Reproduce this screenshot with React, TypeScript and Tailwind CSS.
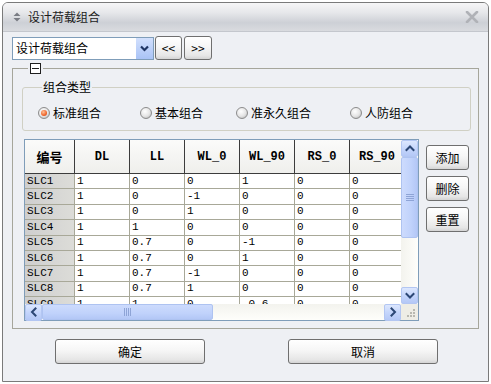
import React from "react";

const CJK = "[font-family:'Noto_Sans_CJK_SC','Noto_Sans',sans-serif]";
const MONO = "[font-family:'Liberation_Mono','Noto_Sans_CJK_SC',monospace]";

function XPButton({ children, className }: { children: React.ReactNode; className: string }) {
  return (
    <div
      className={
        "flex items-center justify-center rounded-[3px] border border-[#6f6f6f] bg-[linear-gradient(to_bottom,#ffffff_0%,#f6f6f6_45%,#e6e6e6_85%,#d4d4d4_100%)] text-[12px] leading-none text-black " +
        CJK +
        " " +
        className
      }
    >
      {children}
    </div>
  );
}

function Radio({ label, checked, w }: { label: string; checked?: boolean; w: string }) {
  return (
    <div className={"flex items-center " + w}>
      <span className="flex h-[12px] w-[12px] items-center justify-center rounded-full border border-[#8c8c8c] bg-[radial-gradient(circle_at_40%_35%,#ffffff_0%,#e4e4e4_55%,#a9a9a9_100%)]">
        {checked && (
          <span className="h-[6px] w-[6px] rounded-full bg-[radial-gradient(circle_at_40%_35%,#ffc39a_0%,#f0652a_60%,#c83a10_100%)]" />
        )}
      </span>
      <span className={"ml-[3px] text-[12px] leading-none text-black " + CJK}>{label}</span>
    </div>
  );
}

function ArrowBtn({ dir, className }: { dir: "up" | "down" | "left" | "right"; className?: string }) {
  const d =
    dir === "up"
      ? "M1.5 6 L5 2.5 L8.5 6"
      : dir === "down"
      ? "M1.5 3 L5 6.5 L8.5 3"
      : dir === "left"
      ? "M6.5 1.5 L3 5 L6.5 8.5"
      : "M3.5 1.5 L7 5 L3.5 8.5";
  return (
    <div
      className={
        "flex h-[17px] w-[17px] shrink-0 items-center justify-center rounded-[2px] border border-[#b3c6f2] bg-[linear-gradient(to_bottom,#dce7fe_0%,#c3d4fb_55%,#b4c8f6_100%)] " +
        (className || "")
      }
    >
      <svg width="10" height="10" viewBox="0 0 10 10">
        <path d={d} stroke="#2c4775" strokeWidth="2" fill="none" strokeLinecap="square" />
      </svg>
    </div>
  );
}

const cols = ["DL", "LL", "WL_0", "WL_90", "RS_0", "RS_90"];
const rows: [string, string[]][] = [
  ["SLC1", ["1", "0", "0", "1", "0", "0"]],
  ["SLC2", ["1", "0", "-1", "0", "0", "0"]],
  ["SLC3", ["1", "0", "1", "0", "0", "0"]],
  ["SLC4", ["1", "1", "0", "0", "0", "0"]],
  ["SLC5", ["1", "0.7", "0", "-1", "0", "0"]],
  ["SLC6", ["1", "0.7", "0", "1", "0", "0"]],
  ["SLC7", ["1", "0.7", "-1", "0", "0", "0"]],
  ["SLC8", ["1", "0.7", "1", "0", "0", "0"]],
  ["SLC9", ["1", "1", "0", "-0.6", "0", "0"]],
];

function Table() {
  return (
    <div className="flex h-[182px] w-[395px] flex-col border border-[#7f9db9] bg-white">
      <div className="flex h-[164px]">
        <div className="w-[376px] overflow-hidden">
          <div className="flex h-[34px] w-[420px] border-b border-[#3c3c3c]">
            <div className={"flex w-[50px] shrink-0 items-center justify-center border-r border-[#3c3c3c] bg-[linear-gradient(to_bottom,#fbfbfa,#efefec)] text-[13px] font-bold text-black " + CJK}>
              编号
            </div>
            {cols.map((c) => (
              <div
                key={c}
                className={"flex w-[55px] shrink-0 items-center justify-center border-r border-[#3c3c3c] bg-[linear-gradient(to_bottom,#fbfbfa,#efefec)] text-[12px] font-bold text-black " + MONO}
              >
                {c}
              </div>
            ))}
          </div>
          {rows.map(([name, vals]) => (
            <div key={name} className="flex h-[15.4px] w-[420px]">
              <div className={"flex w-[50px] shrink-0 items-center border-r border-b border-[#a8a898] bg-[linear-gradient(to_right,#cfcfcf,#dcdcd8)] pl-[2px] text-[11px] leading-none text-black " + MONO}>
                {name}
              </div>
              {vals.map((v, i) => (
                <div
                  key={i}
                  className={"flex w-[55px] shrink-0 items-center border-r border-b border-[#a8a898] pl-[2px] text-[11px] leading-none text-black " + MONO}
                >
                  {v}
                </div>
              ))}
            </div>
          ))}
        </div>
        <div className="flex w-[17px] flex-col bg-[linear-gradient(to_right,#f3f3ee,#fefefb)]">
          <ArrowBtn dir="up" />
          <div className="flex h-[81px] w-[17px] items-center justify-center rounded-[2px] border border-[#aec3f1] bg-[linear-gradient(to_right,#cddbfd,#c0d2fb_60%,#b3c7f6)]">
            <svg width="8" height="7" viewBox="0 0 8 7">
              <path d="M0 0.5 H8 M0 2.5 H8 M0 4.5 H8 M0 6.5 H8" stroke="#8ea4d6" strokeWidth="1" />
            </svg>
          </div>
          <div className="flex-1" />
          <ArrowBtn dir="down" />
        </div>
      </div>
      <div className="flex h-[16px]">
        <div className="flex w-[376px] items-center bg-[linear-gradient(to_bottom,#f3f3ee,#fefefb)]">
          <ArrowBtn dir="left" className="h-[16px]" />
          <div className="flex h-[16px] w-[171px] items-center justify-center rounded-[2px] border border-[#aec3f1] bg-[linear-gradient(to_bottom,#cddbfd,#c0d2fb_60%,#b3c7f6)]">
            <svg width="7" height="8" viewBox="0 0 7 8">
              <path d="M0.5 0 V8 M2.5 0 V8 M4.5 0 V8 M6.5 0 V8" stroke="#8ea4d6" strokeWidth="1" />
            </svg>
          </div>
          <div className="flex-1" />
          <ArrowBtn dir="right" className="h-[16px]" />
        </div>
        <div className="flex w-[17px] items-end justify-end bg-[#eeede5] p-[2px]">
          <svg width="10" height="10" viewBox="0 0 10 10">
            <g fill="#b8b8b0">
              <rect x="7" y="1" width="2" height="2" />
              <rect x="4" y="4" width="2" height="2" />
              <rect x="7" y="4" width="2" height="2" />
              <rect x="1" y="7" width="2" height="2" />
              <rect x="4" y="7" width="2" height="2" />
              <rect x="7" y="7" width="2" height="2" />
            </g>
          </svg>
        </div>
      </div>
    </div>
  );
}

export default function App() {
  return (
    <div className="h-[384px] w-[491px] bg-white pl-[2px] pt-[2px]">
      <div className="flex h-[380px] w-[487px] flex-col overflow-hidden rounded-t-[6px] border border-[#7a7a7a] bg-[#eef0f4]">
        {/* title bar */}
        <div className="flex h-[29px] shrink-0 items-center border-b border-[#c4c7cd] bg-[linear-gradient(to_bottom,#f6f6f7_0%,#e6e7ea_35%,#cdd0d6_70%,#d9dbdf_100%)] pl-[10px] pr-[9px]">
          <svg width="8" height="10" viewBox="0 0 8 10">
            <path d="M4 0.5 L7.5 4 H0.5 Z M4 9.5 L7.5 6 H0.5 Z" fill="#7a7d84" />
          </svg>
          <span className={"ml-[7px] text-[12px] text-[#1b1b1b] " + CJK}>设计荷载组合</span>
          <div className="flex-1" />
          <svg width="14" height="12" viewBox="0 0 14 12">
            <path d="M2 1 L12 11 M12 1 L2 11" stroke="#b0b2b7" strokeWidth="2.6" strokeLinecap="round" />
          </svg>
        </div>

        {/* body */}
        <div className="flex flex-1 flex-col pl-[9px] pt-[4px]">
          <div className="flex h-[24px] items-center">
            <div className="flex h-[23px] w-[142px] items-center border border-[#7f9db9] bg-white">
              <span className={"flex-1 pl-[3px] text-[12px] text-black " + CJK}>设计荷载组合</span>
              <div className="flex h-[21px] w-[17px] items-center justify-center bg-[linear-gradient(to_bottom,#d2e0fd,#a9c3f6)]">
                <svg width="9" height="7" viewBox="0 0 9 7">
                  <path d="M1 1.5 L4.5 5 L8 1.5" stroke="#1f3563" strokeWidth="2.2" fill="none" />
                </svg>
              </div>
            </div>
            <XPButton className="ml-[1px] h-[24px] w-[27px]">&lt;&lt;</XPButton>
            <XPButton className="ml-[2px] h-[24px] w-[28px]">&gt;&gt;</XPButton>
          </div>

          <fieldset className="mt-[3px] h-[266px] w-[467px] border border-[#a6a69b] pl-[9px]">
            <legend className="ml-[6px] px-[2px]">
              <div className="flex h-[11px] w-[11px] items-center justify-center border border-[#1e1e1e] bg-white">
                <div className="h-[1px] w-[7px] bg-[#1e1e1e]" />
              </div>
            </legend>

            <fieldset className="mt-[6px] h-[51px] w-[449px] rounded-[3px] border border-[#d0d0c4] pl-[15px]">
              <legend className={"ml-[4px] px-[1px] text-[12px] leading-[14px] text-black " + CJK}>组合类型</legend>
              <div className="mt-[13px] flex">
                <Radio label="标准组合" checked w="w-[102px]" />
                <Radio label="基本组合" w="w-[96px]" />
                <Radio label="准永久组合" w="w-[114px]" />
                <Radio label="人防组合" w="w-[100px]" />
              </div>
            </fieldset>

            <div className="ml-[2px] mt-[8px] flex">
              <Table />
              <div className="ml-[7px] mt-[6px] flex flex-col gap-[6px]">
                <XPButton className="h-[25px] w-[43px]">添加</XPButton>
                <XPButton className="h-[25px] w-[43px]">删除</XPButton>
                <XPButton className="h-[25px] w-[43px]">重置</XPButton>
              </div>
            </div>
          </fieldset>

          <div className="ml-[43px] mt-[10px] flex gap-[83px]">
            <XPButton className="h-[25px] w-[150px]">确定</XPButton>
            <XPButton className="h-[25px] w-[150px]">取消</XPButton>
          </div>
        </div>
      </div>
    </div>
  );
}
